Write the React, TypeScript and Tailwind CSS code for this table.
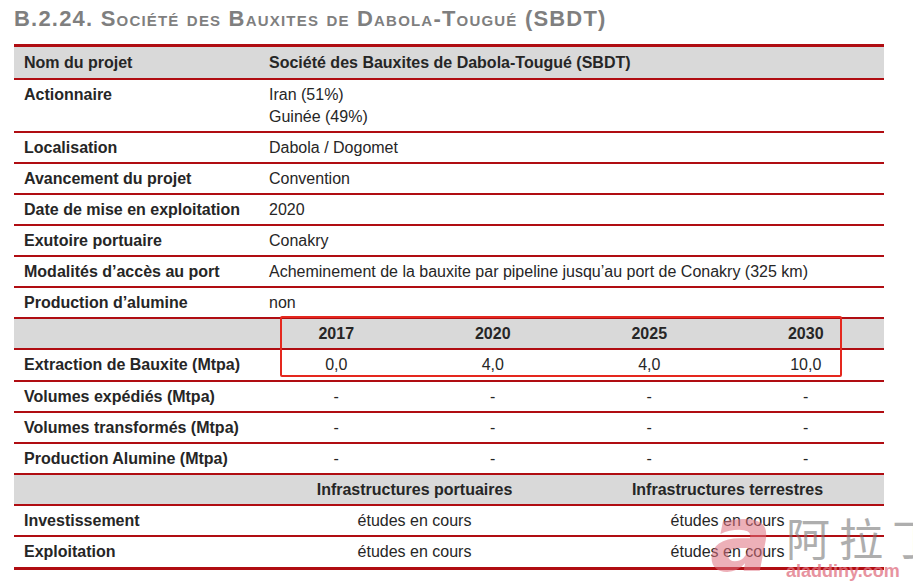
import React from "react";

const font = { fontFamily: '"Liberation Sans", Arial, sans-serif' };

type Row = { label: string; value?: React.ReactNode; bold?: boolean };

const infoRows: Row[] = [
  { label: "Localisation", value: "Dabola / Dogomet" },
  { label: "Avancement du projet", value: "Convention" },
  { label: "Date de mise en exploitation", value: "2020" },
  { label: "Exutoire portuaire", value: "Conakry" },
  {
    label: "Modalités d’accès au port",
    value: "Acheminement de la bauxite par pipeline jusqu’au port de Conakry (325 km)",
  },
  { label: "Production d’alumine", value: "non" },
];

const years = ["2017", "2020", "2025", "2030"];

const volumeRows = [
  "Volumes expédiés (Mtpa)",
  "Volumes transformés (Mtpa)",
  "Production Alumine (Mtpa)",
];

const App: React.FC = () => {
  return (
    <div className="relative w-[913px] h-[586px] overflow-hidden bg-white text-[16px] text-[#262626]" style={font}>
      {/* Title */}
      <h1 className="h-[44px] pl-[14px] pt-[5px] text-[22px] leading-[27px] tracking-[1.2px] font-bold text-[#7f7f7f] [font-variant:small-caps]">
        B.2.24. Société des Bauxites de Dabola-Tougué (SBDT)
      </h1>

      {/* Table */}
      <div className="ml-[14px] w-[870px] border-t-[3px] border-[#b00d12]">
        <div className="flex h-[33px] items-center bg-[#d9d9d9] border-b-2 border-[#b00d12] font-bold">
          <div className="w-[244px] pl-[10px]">Nom du projet</div>
          <div className="pl-[11px]">Société des Bauxites de Dabola-Tougué (SBDT)</div>
        </div>

        <div className="flex h-[53px] border-b-2 border-[#b00d12] pt-[4px] leading-[22px]">
          <div className="w-[244px] pl-[10px] font-bold">Actionnaire</div>
          <div className="pl-[11px]">
            <div>Iran (51%)</div>
            <div>Guinée (49%)</div>
          </div>
        </div>

        {infoRows.map((row) => (
          <div key={row.label} className="flex h-[31px] items-center border-b-2 border-[#b00d12]">
            <div className="w-[244px] pl-[10px] font-bold">{row.label}</div>
            <div className="pl-[11px]">{row.value}</div>
          </div>
        ))}

        {/* Years block with highlight box */}
        <div className="relative">
          <div className="flex h-[31px] items-center bg-[#d9d9d9] border-b-2 border-[#b00d12] font-bold">
            <div className="w-[244px]" />
            {years.map((y) => (
              <div key={y} className="flex-1 text-center">{y}</div>
            ))}
          </div>
          <div className="flex h-[32px] items-center border-b-2 border-[#b00d12]">
            <div className="w-[244px] pl-[10px] font-bold">Extraction de Bauxite (Mtpa)</div>
            {["0,0", "4,0", "4,0", "10,0"].map((v, i) => (
              <div key={i} className="flex-1 text-center">{v}</div>
            ))}
          </div>
          <div className="absolute left-[266px] top-[-3px] w-[562px] h-[61px] border-2 border-[#e5281e] rounded-[2px]" />
        </div>

        {volumeRows.map((label) => (
          <div key={label} className="flex h-[31px] items-center border-b-2 border-[#b00d12]">
            <div className="w-[244px] pl-[10px] font-bold">{label}</div>
            {years.map((y) => (
              <div key={y} className="flex-1 text-center">-</div>
            ))}
          </div>
        ))}

        <div className="flex h-[31px] items-center bg-[#d9d9d9] border-b-2 border-[#b00d12] font-bold">
          <div className="w-[244px]" />
          <div className="flex-1 text-center">Infrastructures portuaires</div>
          <div className="flex-1 text-center">Infrastructures terrestres</div>
        </div>

        {["Investissement", "Exploitation"].map((label, i) => (
          <div
            key={label}
            className={`flex items-center border-[#b00d12] ${i === 1 ? "h-[33px] border-b-[3px]" : "h-[31px] border-b-2"}`}
          >
            <div className="w-[244px] pl-[10px] font-bold">{label}</div>
            <div className="flex-1 text-center">études en cours</div>
            <div className="flex-1 text-center">études en cours</div>
          </div>
        ))}
      </div>

      {/* Watermark */}
      <div className="pointer-events-none absolute left-[710px] top-[494px] flex items-start whitespace-nowrap">
        <div
          className="text-[92px] leading-[92px] font-bold italic text-[#e0707f] opacity-55"
          style={{ fontFamily: '"DejaVu Sans", sans-serif' }}
        >
          a
        </div>
        <div className="ml-[14px] flex flex-col">
          <div
            className="mt-[18px] text-[44px] leading-[50px] tracking-[9px] text-[#7a7a7a] opacity-60"
            style={{ fontFamily: '"Noto Sans CJK SC", sans-serif' }}
          >
            阿拉丁
          </div>
          <div className="text-[18px] leading-[18px] font-bold text-[#e0707f] opacity-75">aladdiny.com</div>
        </div>
      </div>
    </div>
  );
};

export default App;
